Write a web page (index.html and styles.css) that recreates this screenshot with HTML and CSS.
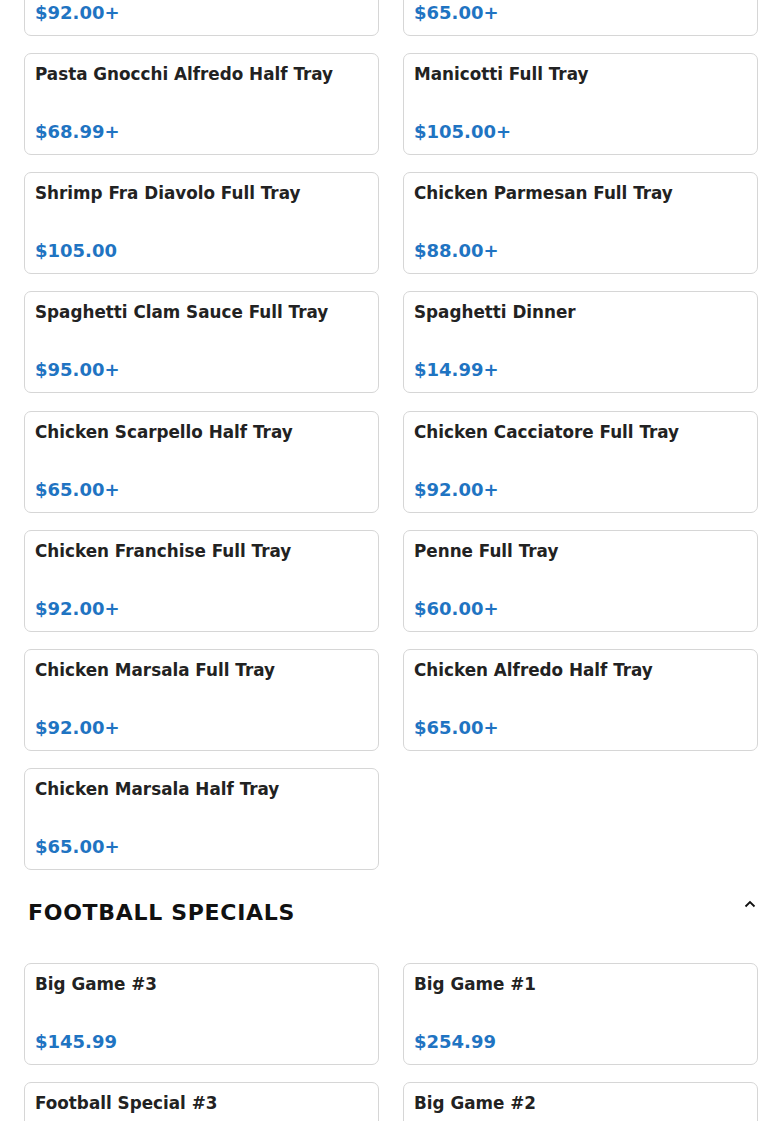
FILE: index.html
```html
<!DOCTYPE html>
<html lang="en">
<head>
    <meta charset="UTF-8">
    <title>Menu</title>
    <link rel="stylesheet" href="styles.css">
</head>
<body>
    <div class="page">
        <!-- Pasta trays -->
        <div class="grid grid-top">
            <div class="item"><div class="item-name">Chicken Cacciatore Full Tray</div><div class="item-price">$92.00+</div></div>
            <div class="item"><div class="item-name">Chicken Alfredo Half Tray</div><div class="item-price">$65.00+</div></div>
            <div class="item"><div class="item-name">Pasta Gnocchi Alfredo Half Tray</div><div class="item-price">$68.99+</div></div>
            <div class="item"><div class="item-name">Manicotti Full Tray</div><div class="item-price">$105.00+</div></div>
            <div class="item"><div class="item-name">Shrimp Fra Diavolo Full Tray</div><div class="item-price">$105.00</div></div>
            <div class="item"><div class="item-name">Chicken Parmesan Full Tray</div><div class="item-price">$88.00+</div></div>
            <div class="item"><div class="item-name">Spaghetti Clam Sauce Full Tray</div><div class="item-price">$95.00+</div></div>
            <div class="item"><div class="item-name">Spaghetti Dinner</div><div class="item-price">$14.99+</div></div>
            <div class="item"><div class="item-name">Chicken Scarpello Half Tray</div><div class="item-price">$65.00+</div></div>
            <div class="item"><div class="item-name">Chicken Cacciatore Full Tray</div><div class="item-price">$92.00+</div></div>
            <div class="item"><div class="item-name">Chicken Franchise Full Tray</div><div class="item-price">$92.00+</div></div>
            <div class="item"><div class="item-name">Penne Full Tray</div><div class="item-price">$60.00+</div></div>
            <div class="item"><div class="item-name">Chicken Marsala Full Tray</div><div class="item-price">$92.00+</div></div>
            <div class="item"><div class="item-name">Chicken Alfredo Half Tray</div><div class="item-price">$65.00+</div></div>
            <div class="item"><div class="item-name">Chicken Marsala Half Tray</div><div class="item-price">$65.00+</div></div>
        </div>

        <!-- Football specials -->
        <div class="section-head">
            <h2 class="section-title">FOOTBALL SPECIALS</h2>
            <svg class="chevron" width="12" height="8" viewBox="0 0 12 8" aria-hidden="true">
                <path d="M1.5 6.5 L6 2 L10.5 6.5" fill="none" stroke="#111" stroke-width="1.8"/>
            </svg>
        </div>

        <div class="grid">
            <div class="item"><div class="item-name">Big Game #3</div><div class="item-price">$145.99</div></div>
            <div class="item"><div class="item-name">Big Game #1</div><div class="item-price">$254.99</div></div>
            <div class="item"><div class="item-name">Football Special #3</div><div class="item-price">$99.99</div></div>
            <div class="item"><div class="item-name">Big Game #2</div><div class="item-price">$199.99</div></div>
        </div>
    </div>
</body>
</html>
```

FILE: styles.css
```css
/* Base */
html, body {
    margin: 0;
    padding: 0;
    background: #fff;
    overflow: hidden;
}

body {
    font-family: "DejaVu Sans", Verdana, sans-serif;
    color: #222;
}

.page {
    width: 734px;
    padding: 0 24px;
    border-right: 1px solid #efefef;
    margin-top: -66px;
}

/* Grid of menu items */
.grid {
    display: grid;
    grid-template-columns: 1fr 1fr;
    column-gap: 24px;
    row-gap: 17.15px;
}

.item {
    display: flex;
    flex-direction: column;
    justify-content: space-between;
    height: 83px;
    padding: 8px 10px 9px;
    border: 1px solid #d6d6d6;
    border-radius: 7px;
    background: #fff;
}

.item-name {
    font-size: 16.8px;
    font-weight: bold;
    line-height: 25px;
    color: #222;
}

.item-price {
    font-size: 18px;
    font-weight: bold;
    line-height: 27px;
    color: #1f74c2;
}

/* Section heading */
.section-head {
    display: flex;
    align-items: center;
    justify-content: space-between;
    padding: 0 4px;
    height: 93px;
}

.section-title {
    margin: 0;
    font-size: 22px;
    letter-spacing: 0.7px;
    color: #111;
    padding-bottom: 8px;
}

.chevron {
    margin-top: -24px;
    margin-right: -2px;
}
```
